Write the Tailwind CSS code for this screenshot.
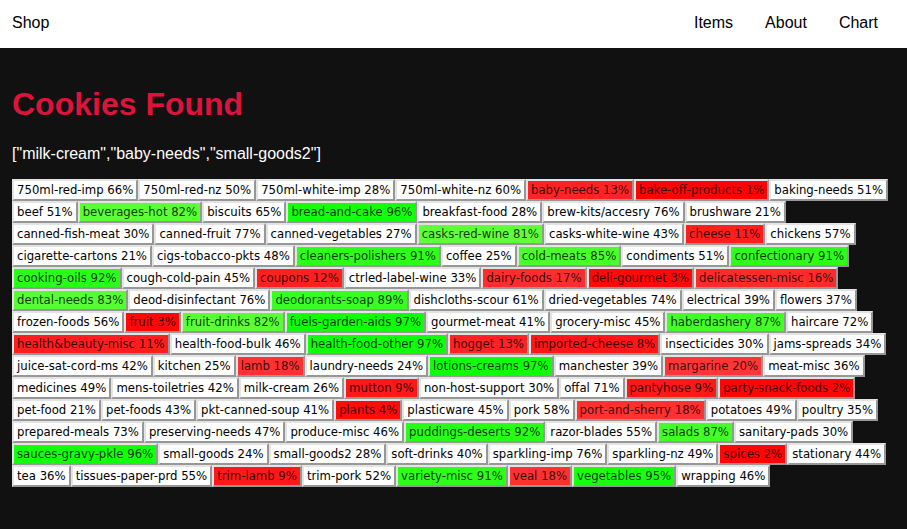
<!DOCTYPE html>
<html lang="en">
<head>
<meta charset="utf-8">
<meta name="viewport" content="width=device-width, initial-scale=1">
<title>Shop</title>
<script src="https://cdn.jsdelivr.net/npm/@tailwindcss/browser@4"></script>
</head>
<body class="min-h-screen bg-[#111111] text-base text-white font-['Liberation_Sans',Arial,sans-serif]">
<header class="flex items-center justify-between bg-white pt-[11px] pb-[13px] pl-3 pr-[29px] text-black">
  <a href="#">Shop</a>
  <nav class="flex gap-8">
    <a href="#">Items</a>
    <a href="#">About</a>
    <a href="#">Chart</a>
  </nav>
</header>
<main class="px-3 pt-9 pb-10">
  <h1 class="text-[32px] leading-10 font-bold text-[#dc143c]">Cookies Found</h1>
  <p class="mt-[18px] leading-6">["milk-cream","baby-needs","small-goods2"]</p>
  <div id="items" class="mt-[13px] flex flex-col items-start font-[Tahoma,'DejaVu_Sans_Condensed',sans-serif] text-[13px]"></div>
</main>
<script>
const rows = [
  "750ml-red-imp 66,750ml-red-nz 50,750ml-white-imp 28,750ml-white-nz 60,baby-needs 13,bake-off-products 1,baking-needs 51",
  "beef 51,beverages-hot 82,biscuits 65,bread-and-cake 96,breakfast-food 28,brew-kits/accesry 76,brushware 21",
  "canned-fish-meat 30,canned-fruit 77,canned-vegetables 27,casks-red-wine 81,casks-white-wine 43,cheese 11,chickens 57",
  "cigarette-cartons 21,cigs-tobacco-pkts 48,cleaners-polishers 91,coffee 25,cold-meats 85,condiments 51,confectionary 91",
  "cooking-oils 92,cough-cold-pain 45,coupons 12,ctrled-label-wine 33,dairy-foods 17,deli-gourmet 3,delicatessen-misc 16",
  "dental-needs 83,deod-disinfectant 76,deodorants-soap 89,dishcloths-scour 61,dried-vegetables 74,electrical 39,flowers 37",
  "frozen-foods 56,fruit 3,fruit-drinks 82,fuels-garden-aids 97,gourmet-meat 41,grocery-misc 45,haberdashery 87,haircare 72",
  "health&beauty-misc 11,health-food-bulk 46,health-food-other 97,hogget 13,imported-cheese 8,insecticides 30,jams-spreads 34",
  "juice-sat-cord-ms 42,kitchen 25,lamb 18,laundry-needs 24,lotions-creams 97,manchester 39,margarine 20,meat-misc 36",
  "medicines 49,mens-toiletries 42,milk-cream 26,mutton 9,non-host-support 30,offal 71,pantyhose 9,party-snack-foods 2",
  "pet-food 21,pet-foods 43,pkt-canned-soup 41,plants 4,plasticware 45,pork 58,port-and-sherry 18,potatoes 49,poultry 35",
  "prepared-meals 73,preserving-needs 47,produce-misc 46,puddings-deserts 92,razor-blades 55,salads 87,sanitary-pads 30",
  "sauces-gravy-pkle 96,small-goods 24,small-goods2 28,soft-drinks 40,sparkling-imp 76,sparkling-nz 49,spices 2,stationary 44",
  "tea 36,tissues-paper-prd 55,trim-lamb 9,trim-pork 52,variety-misc 91,veal 18,vegetables 95,wrapping 46"
];
const highlight = (name, p) => {
  if (p > 80) return `rgb(${(100 - p) * 5}, 255, ${(100 - p) * 3})`;
  if (p < 20 || name === "margarine") return `rgb(255, ${Math.round(p * 2.7)}, ${Math.round(p * 2.7)})`;
  return null;
};
const root = document.getElementById("items");
for (const row of rows) {
  const line = document.createElement("div");
  line.className = "flex";
  for (const entry of row.split(",")) {
    const [name, value] = entry.split(" ");
    const button = document.createElement("button");
    button.type = "button";
    button.className = "h-[22px] border-2 border-t-[#e3e3e3] border-l-[#e3e3e3] border-r-[#979797] border-b-[#979797] bg-white px-[3px] leading-[18px] whitespace-nowrap text-black";
    const colour = highlight(name, Number(value));
    if (colour) {
      button.style.backgroundColor = colour;
      button.classList.replace("text-black", "text-black/80");
    }
    button.textContent = `${name} ${value}%`;
    line.append(button);
  }
  root.append(line);
}
</script>
</body>
</html>
